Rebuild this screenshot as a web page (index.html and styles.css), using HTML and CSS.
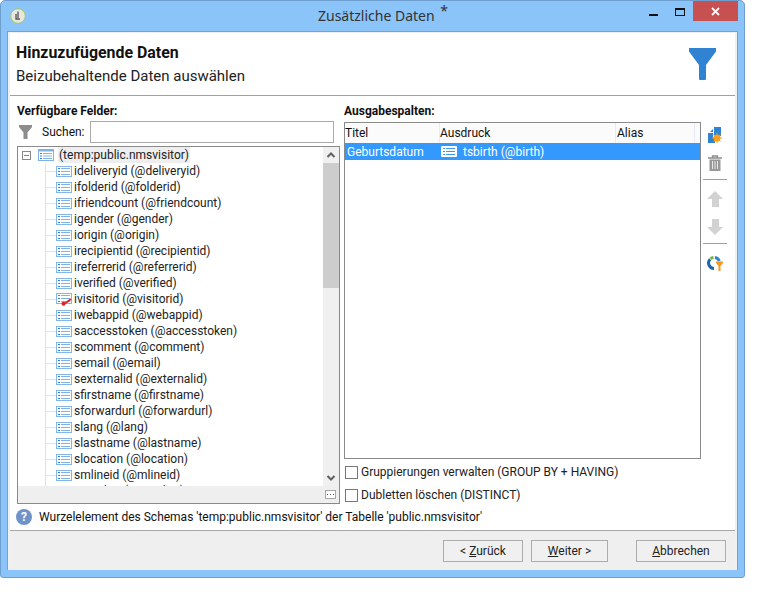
FILE: index.html
```html
<!DOCTYPE html>
<html>
<head>
<meta charset="utf-8" />
<title>Zusätzliche Daten</title>
<link rel="stylesheet" href="styles.css">
</head>
<body>
<svg class="defs" width="0" height="0">
  <symbol id="field" viewBox="0 0 16 11">
    <rect x="0.5" y="0.5" width="15" height="10" fill="#fff" stroke="#85b6e4"/>
    <path d="M2 2.500h2M2 5.500h2M2 8.500h2" stroke="#2f86d6"/>
    <path d="M5 2.500h9M5 5.500h9M5 8.500h9" stroke="#7db3e6"/>
  </symbol>
  <symbol id="rootfield" viewBox="0 0 16 12">
    <rect x="0.5" y="0.5" width="15" height="11" fill="#fff" stroke="#7fb2e0"/>
    <path d="M1 1.500h14" stroke="#7fb2e0" stroke-width="2"/>
    <path d="M2 4.500h2M2 7h2M2 9.500h2" stroke="#2f86d6"/>
    <path d="M5 4.500h9M5 7h9M5 9.500h9" stroke="#7db3e6"/>
  </symbol>
</svg>
<div class="window">
  <div class="titlebar">
    <svg class="app-icon" width="16" height="16" viewBox="0 0 16 16">
      <circle cx="8" cy="8" r="7.300" fill="#e6e8e0" stroke="#a9c46c"/>
      <path d="M8 3.500v6.500M6 6v5h4" fill="none" stroke="#555" stroke-width="1.300"/>
    </svg>
    <div class="title">Zusätzliche Daten <sup>*</sup></div>
    <div class="win-min"></div>
    <div class="win-max"></div>
    <div class="win-close">
      <svg width="9" height="9" viewBox="0 0 9 9"><path d="M1 1l7 7M8 1l-7 7" stroke="#fff" stroke-width="1.800"/></svg>
    </div>
  </div>
  <div class="client">
    <div class="header">
      <div>
        <h1>Hinzuzufügende Daten</h1>
        <p>Beizubehaltende Daten auswählen</p>
      </div>
      <svg class="funnel" width="27" height="32" viewBox="0 0 27 32">
        <path d="M0 0h27v3.500L17 17V31a1 1 0 0 1-1 1h-5a1 1 0 0 1-1-1V17L0 3.500z" fill="#2f83d2"/>
      </svg>
    </div>
    <div class="main">
      <div class="left">
        <div class="label">Verfügbare Felder:</div>
        <div class="search">
          <svg width="14" height="14" viewBox="0 0 14 14"><path d="M0 0h13v2L8.500 7.500V14h-4V7.500L0 2z" fill="#8c8c8c"/></svg>
          <span>Suchen:</span>
          <input type="text" />
        </div>
        <div class="tree">
          <div class="tree-body">
            <div class="tree-list">
              <div class="row root">
                <span class="expander"></span>
                <svg width="16" height="12"><use href="#rootfield"/></svg>
                <span class="root-text">(temp:public.nmsvisitor)</span>
              </div>
              <div class="row"><svg width="16" height="11"><use href="#field"/></svg>ideliveryid (@deliveryid)</div>
              <div class="row"><svg width="16" height="11"><use href="#field"/></svg>ifolderid (@folderid)</div>
              <div class="row"><svg width="16" height="11"><use href="#field"/></svg>ifriendcount (@friendcount)</div>
              <div class="row"><svg width="16" height="11"><use href="#field"/></svg>igender (@gender)</div>
              <div class="row"><svg width="16" height="11"><use href="#field"/></svg>iorigin (@origin)</div>
              <div class="row"><svg width="16" height="11"><use href="#field"/></svg>irecipientid (@recipientid)</div>
              <div class="row"><svg width="16" height="11"><use href="#field"/></svg>ireferrerid (@referrerid)</div>
              <div class="row"><svg width="16" height="11"><use href="#field"/></svg>iverified (@verified)</div>
              <div class="row">
                <svg width="16" height="13" viewBox="0 0 16 13">
                  <use href="#field" width="16" height="11"/>
                  <path d="M15 6l-6 4.500" stroke="#d8232a" stroke-width="1.600"/>
                  <circle cx="7.500" cy="10.800" r="2" fill="#d8232a"/>
                </svg>ivisitorid (@visitorid)</div>
              <div class="row"><svg width="16" height="11"><use href="#field"/></svg>iwebappid (@webappid)</div>
              <div class="row"><svg width="16" height="11"><use href="#field"/></svg>saccesstoken (@accesstoken)</div>
              <div class="row"><svg width="16" height="11"><use href="#field"/></svg>scomment (@comment)</div>
              <div class="row"><svg width="16" height="11"><use href="#field"/></svg>semail (@email)</div>
              <div class="row"><svg width="16" height="11"><use href="#field"/></svg>sexternalid (@externalid)</div>
              <div class="row"><svg width="16" height="11"><use href="#field"/></svg>sfirstname (@firstname)</div>
              <div class="row"><svg width="16" height="11"><use href="#field"/></svg>sforwardurl (@forwardurl)</div>
              <div class="row"><svg width="16" height="11"><use href="#field"/></svg>slang (@lang)</div>
              <div class="row"><svg width="16" height="11"><use href="#field"/></svg>slastname (@lastname)</div>
              <div class="row"><svg width="16" height="11"><use href="#field"/></svg>slocation (@location)</div>
              <div class="row"><svg width="16" height="11"><use href="#field"/></svg>smlineid (@mlineid)</div>
              <div class="row"><svg width="16" height="11"><use href="#field"/></svg>snumber (@number)</div>
            </div>
            <div class="scrollbar">
              <svg width="16" height="16" viewBox="0 0 16 16"><path d="M4.500 10L8 6.500l3.500 3.500" fill="none" stroke="#606060" stroke-width="2"/></svg>
              <div class="thumb"></div>
              <div class="track"></div>
              <svg width="16" height="16" viewBox="0 0 16 16"><path d="M4.500 6L8 9.500 11.500 6" fill="none" stroke="#606060" stroke-width="2"/></svg>
            </div>
          </div>
          <div class="tree-foot">
            <svg width="11" height="9" viewBox="0 0 11 9"><rect x="0.500" y="0.500" width="10" height="8" fill="#fff" stroke="#a8a8a8"/><path d="M2 4.500h1M5 4.500h1M8 4.500h1" stroke="#555"/></svg>
          </div>
        </div>
      </div>
      <div class="right">
        <div class="label">Ausgabespalten:</div>
        <div class="right-top">
          <div class="table">
            <div class="thead">
              <div class="th col-title">Titel</div>
              <div class="th col-expr">Ausdruck</div>
              <div class="th col-alias">Alias</div>
            </div>
            <div class="tr-sel">
              <div class="col-title">Geburtsdatum</div>
              <div class="col-expr expr">
                <svg width="16" height="11" viewBox="0 0 16 11"><rect width="16" height="11" rx="1" fill="#fff"/><path d="M2 2.500h2M2 5.500h2M2 8.500h2M5 2.500h9M5 5.500h9M5 8.500h9" stroke="#3a96f5"/></svg>
                tsbirth (@birth)
              </div>
            </div>
          </div>
          <div class="tools">
            <svg width="16" height="16" viewBox="0 0 16 16">
              <path d="M7 0h7v9H9.500L7 8z" fill="#2f83d2"/>
              <path d="M1 6h5v4l2 3v3H1z" fill="#2f83d2"/>
              <path d="M3 5l3-3v3z" fill="#2f83d2"/>
              <path d="M10 6v10M5 11h10M6.500 7.500l7 7M13.500 7.500l-7 7" stroke="#f39a1e"/>
              <circle cx="10" cy="11" r="3.400" fill="#f7a01e"/>
            </svg>
            <svg width="14" height="16" viewBox="0 0 14 16">
              <path d="M0 3h14M4.500 3V1h5v2" fill="none" stroke="#8c8c8c" stroke-width="1.300"/>
              <path d="M1.500 4.500h11V16h-11z" fill="#999"/>
              <path d="M4.500 6v8M7 6v8M9.500 6v8" stroke="#e8e8e8"/>
            </svg>
            <div class="tool-sep"></div>
            <svg width="16" height="16" viewBox="0 0 16 16"><path d="M8 0l8 8h-4v8H5V8H0z" fill="#d2d2d2"/></svg>
            <svg width="16" height="16" viewBox="0 0 16 16"><path d="M8 16l8-8h-4V0H5v8H0z" fill="#d2d2d2"/></svg>
            <div class="tool-sep"></div>
            <svg width="16" height="16" viewBox="0 0 16 16">
              <g fill="none" stroke-width="3">
                <path d="M3.100 4.200A5.500 5.500 0 0 0 7 13.500" stroke="#1f66ad"/>
                <path d="M8 2.600A5.500 5.500 0 0 1 12.300 6" stroke="#2f83d2"/>
                <path d="M3.500 3.800A5.500 5.500 0 0 1 6.500 2.500" stroke="#76b53d"/>
              </g>
              <path d="M9 6.500h7v1.500L13.500 11v5h-2v-5L9 8z" fill="#f39a1e"/>
            </svg>
          </div>
        </div>
        <label class="check"><span class="box"></span>Gruppierungen verwalten (GROUP BY + HAVING)</label>
        <label class="check"><span class="box"></span>Dubletten löschen (DISTINCT)</label>
      </div>
    </div>
    <div class="status">
      <span class="help">?</span>
      <span>Wurzelelement des Schemas 'temp:public.nmsvisitor' der Tabelle 'public.nmsvisitor'</span>
    </div>
    <div class="footer">
      <button class="btn btn-back">&lt; <u>Z</u>urück</button>
      <button class="btn btn-next"><u>W</u>eiter &gt;</button>
      <button class="btn btn-cancel"><u>A</u>bbrechen</button>
    </div>
  </div>
</div>
</body>
</html>
```

FILE: styles.css
```css
* {box-sizing: border-box;}
body {margin: 0; background: #fff; font-family: Roboto, "Noto Sans", sans-serif; font-size: 12px; color: #111;}
.defs {display: block; height: 0;}
.window {width: 745px; height: 578px; background: #8bc4f8; border: 1px solid #6f9fcf; border-radius: 5px 5px 3px 3px; display: flex; flex-direction: column; padding: 0 6px 7px 6px;}
.titlebar {height: 30px; flex: none; display: flex; align-items: flex-start;}
.app-icon {margin: 7px 0 0 3px;}
.title {margin: 5px 0 0 292px; font-family: "Noto Sans", sans-serif; font-size: 14px; line-height: 19px; color: #333;}
.title sup {font-size: 14px; line-height: 0; vertical-align: 5px; margin-left: 2px;}
.win-min {width: 9px; height: 2px; background: #111; margin: 13px 0 0 auto;}
.win-max {width: 10px; height: 8px; border: 1px solid #111; border-top-width: 2px; margin: 7px 8px 0 17px;}
.win-close {width: 45px; height: 20px; background: #c75050; display: flex; align-items: center; justify-content: center;}
.client {flex: 1; background: #f0f0f0; border: 1px solid #6fa3d6; border-bottom: 0; padding: 1px 2px 0; display: flex; flex-direction: column; min-height: 0;}
.header {height: 63px; flex: none; background: #fff; padding: 11px 19px 0 6px; border-bottom: 1px solid #a0a0a0; display: flex; justify-content: space-between;}
h1 {margin: 0; font-size: 15.900px; line-height: 18px; font-weight: 700; color: #111;}
.header p {margin: 5px 0 0; font-size: 15px; line-height: 19px; color: #222;}
.funnel {margin-top: 4px;}
.main {flex: 1; background: #fff; display: flex; padding: 7px 0 0 7px; min-height: 0;}
.label {font-weight: 700; font-size: 12px; line-height: 16px;}
.left {width: 323px; flex: none;}
.search {display: flex; align-items: center; height: 22px; margin-top: 2px; padding-left: 2px;}
.search span {margin-left: 9px; width: 48px;}
.search input {width: 244px; height: 22px; border: 1px solid #aaa; background: #fff; margin: 0;}
.tree {height: 358px; margin-top: 3px; border: 1px solid #8a8a8a; display: flex; flex-direction: column;}
.tree-body {flex: 1; display: flex; min-height: 0;}
.tree-list {flex: 1; overflow: hidden;}
.row {height: 16px; display: flex; align-items: center; white-space: nowrap; padding-left: 38px; line-height: 16px; color: #222;
  background: linear-gradient(#e2e2e2, #e2e2e2) no-repeat 27px 50% / 11px 1px, linear-gradient(#e2e2e2, #e2e2e2) no-repeat 27px 0 / 1px 100%;}
.row svg {margin-right: 2px; flex: none;}
.root {padding-left: 4px; background: none;}
.expander {width: 9px; height: 9px; border: 1px solid #888; background: linear-gradient(#888, #888) center / 5px 1px no-repeat; margin-right: 7px;}
.root svg {margin-right: 4px;}
.root-text {background: #eee; padding: 0 1px;}
.scrollbar {width: 16px; flex: none; background: #f0f0f0; display: flex; flex-direction: column;}
.thumb {height: 125px; background: #cdcdcd; flex: none;}
.track {flex: 1;}
.tree-foot {height: 17px; flex: none; background: #efefef; display: flex; justify-content: flex-end; align-items: center; padding-right: 3px;}
.right {width: 384px; flex: none; margin-left: 4px;}
.right-top {display: flex; margin-top: 3px; height: 337px;}
.table {width: 357px; flex: none; border: 1px solid #8a8a8a; background: #fff;}
.thead {display: flex; height: 20px; background: #fbfbfb;}
.th {line-height: 20px; border-right: 1px solid #e3edf7;}
.th.col-alias {padding-left: 1px;}
.col-title {width: 95px; flex: none;}
.col-expr {width: 176px; flex: none;}
.col-alias {width: 79px; flex: none;}
.tr-sel {display: flex; height: 17px; background: #3399ff; color: #fff; line-height: 18px;}
.tr-sel .col-title {padding-left: 2px;}
.expr {display: flex; align-items: center; gap: 6px; padding-left: 1px; line-height: 16px;}
.tools {display: flex; flex-direction: column; align-items: center; width: 24px; margin-left: 2px; padding-top: 5px; gap: 12px;}
.tool-sep {width: 24px; height: 1px; flex: none; background: #a0a0a0; margin: -4px 0 -1px;}
.check {display: flex; align-items: center; height: 16px; margin-top: 5px; padding-left: 1px; color: #222;}
.check + .check {margin-top: 7px;}
.box {width: 13px; height: 13px; border: 1px solid #777; background: #fff; margin-right: 3px;}
.status {height: 25px; flex: none; background: #fff; display: flex; align-items: center; gap: 7px; padding: 0 0 2px 6px; color: #111;}
.help {width: 16px; height: 16px; border-radius: 50%; background: #6f92c8; color: #fff; font-weight: 700; font-size: 12px; line-height: 16px; text-align: center;}
.footer {height: 40px; flex: none; background: #efefef; border-top: 1px solid #a8a8a8; display: flex; align-items: center;}
.btn {height: 22px; border: 1px solid #acacac; background: #f0f0f0; font: inherit; color: #222; padding: 0; margin: 0;}
.btn-back {width: 80px; margin-left: 433px;}
.btn-next {width: 77px; margin-left: 8px;}
.btn-cancel {width: 90px; margin-left: 28px;}
```
